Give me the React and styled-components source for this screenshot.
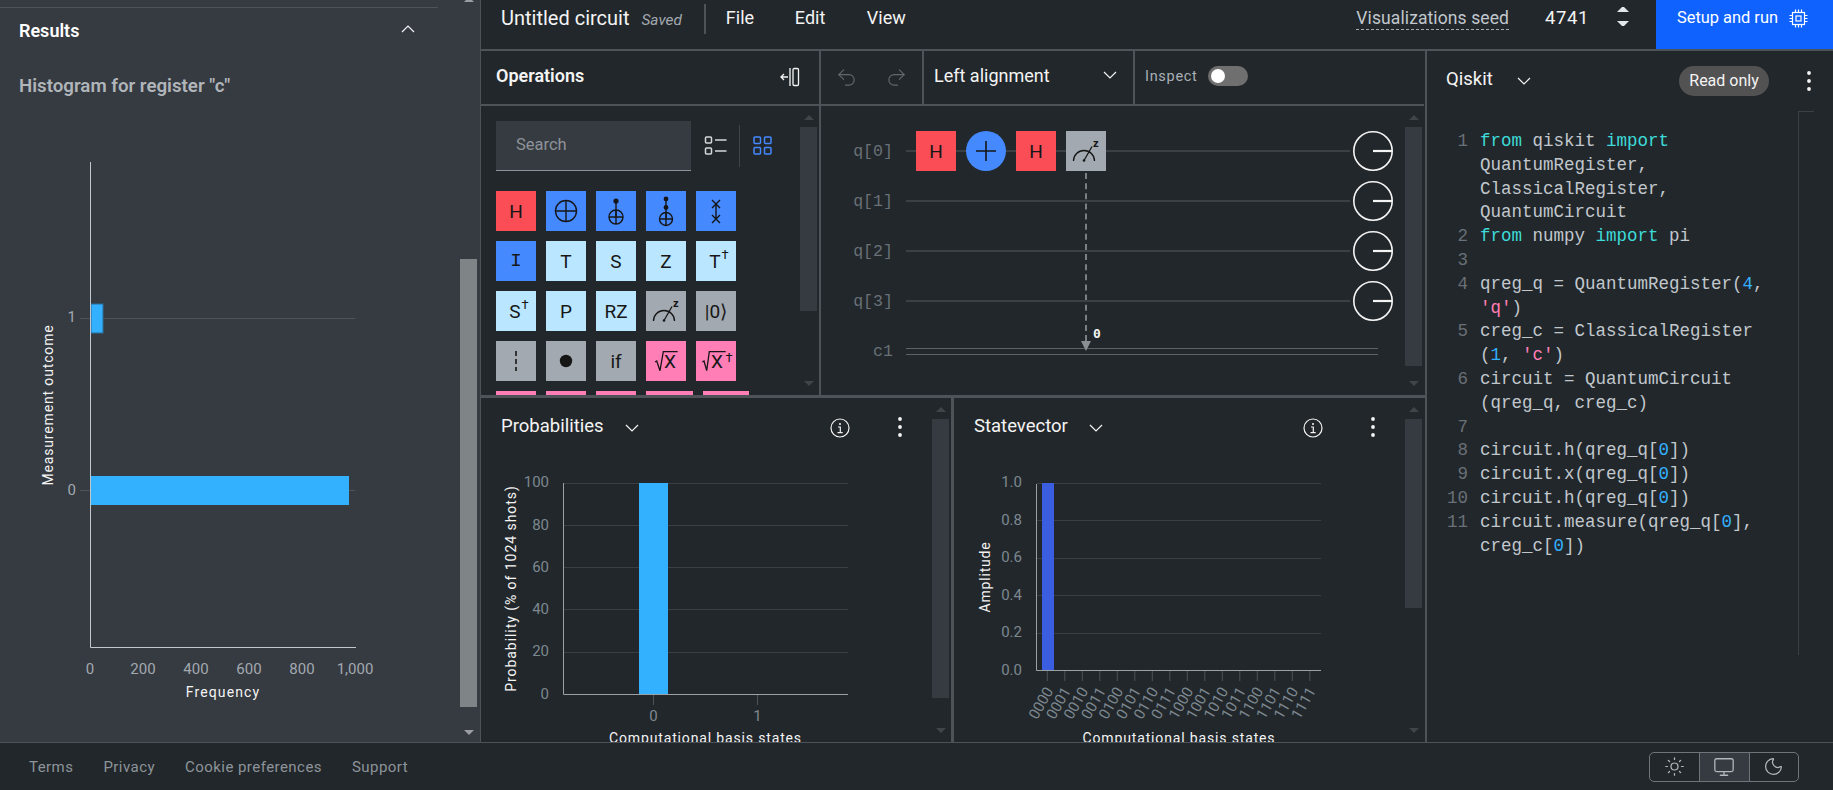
import React from 'react';
import styled, { createGlobalStyle } from 'styled-components';
import { Undo2, Redo2, Sun, Monitor, Moon } from 'lucide-react';

const BG = '#22272b';
const PANEL = '#363a41';
const LINE = '#4d5358';
const SANS = 'Roboto, "Noto Sans", Arial, sans-serif';
const MONO = '"Liberation Mono", "DejaVu Sans Mono", monospace';

const GlobalStyle = createGlobalStyle`
  html, body { margin: 0; padding: 0; background: ${BG}; overflow: hidden; }
  * { box-sizing: border-box; }
  body { font-family: ${SANS}; color: #f4f4f4; }
`;

const Page = styled.div`
  width: 1833px;
  height: 790px;
  display: flex;
  flex-direction: column;
`;
const Main = styled.div`
  height: 742px;
  display: flex;
`;

/* left results column */
const ResultsColumn = styled.aside`
  width: 480px;
  flex: none;
  height: 742px;
  background: ${PANEL};
  display: flex;
  overflow: hidden;
  padding-right: 3px;
`;
const ResultsContent = styled.div`
  width: 460px;
`;
const Rule = styled.div`
  margin-top: 7px;
  width: 438px;
  height: 1px;
  background: ${LINE};
`;
const ResultsHead = styled.div`
  height: 46px;
  padding: 0 23px 2px 19px;
  display: flex;
  align-items: center;
  justify-content: space-between;
  font-size: 18px;
  font-weight: 600;
  color: #fff;
  width: 438px;
  svg { margin-top: -3px; }
`;
const HistogramTitle = styled.div`
  margin: 20px 0 0 19px;
  height: 24px;
  line-height: 24px;
  font-size: 18.7px;
  font-weight: 600;
  color: #b0b5ba;
`;
const ChartSvg = styled.svg`
  display: block;
  flex: none;
`;
const Tick = styled.text`
  font-family: ${SANS};
  font-size: 15px;
  fill: ${p => p.$color || '#7c8790'};
`;
const AxisLabel = styled.text`
  font-family: ${SANS};
  font-size: 14px;
  fill: #f4f4f4;
  letter-spacing: ${p => p.$spacing || '0.3px'};
`;

/* scrollbars */
const Scrollbar = styled.div`
  flex: none;
  width: 17px;
  display: flex;
  flex-direction: column;
  align-items: center;
  margin-right: ${p => p.$right ?? 2}px;
`;
const ArrowUp = styled.div`
  flex: none;
  margin-top: ${p => p.$top ?? 9}px;
  border: 5px solid transparent;
  border-top: 0;
  border-bottom: 5px solid ${p => p.$color || '#3f454b'};
`;
const ArrowDown = styled.div`
  flex: none;
  margin-top: auto;
  margin-bottom: ${p => p.$bottom ?? 9}px;
  border: 5px solid transparent;
  border-bottom: 0;
  border-top: 5px solid ${p => p.$color || '#3f454b'};
`;
const Thumb = styled.div`
  flex: none;
  width: 17px;
  height: ${p => p.$height}px;
  margin-top: ${p => p.$gap ?? 7}px;
  background: ${p => p.$color || PANEL};
`;

/* workspace */
const Workspace = styled.div`
  flex: 1;
  display: flex;
  flex-direction: column;
  border-left: 1px solid ${LINE};
  min-width: 0;
`;
const TopBar = styled.header`
  height: 51px;
  flex: none;
  display: flex;
  border-bottom: 2px solid ${LINE};
`;
const CircuitName = styled.div`
  margin: 6px 0 0 20px;
  height: 24px;
  line-height: 24px;
  font-size: 20px;
  color: #f4f4f4;
`;
const SavedTag = styled.div`
  margin: 8px 0 0 12px;
  height: 24px;
  line-height: 24px;
  font-size: 15.4px;
  font-style: italic;
  color: #a2a9b0;
`;
const Separator = styled.div`
  width: 2px;
  height: 30px;
  margin: 4px 20px 0 22px;
  background: ${LINE};
`;
const MenuItem = styled.div`
  margin-top: 6px;
  width: ${p => p.$w}px;
  height: 24px;
  line-height: 24px;
  font-size: 18px;
`;
const SeedLabel = styled.div`
  margin: 7px 0 0 auto;
  height: 23px;
  line-height: 23px;
  font-size: 17.5px;
  letter-spacing: 0.1px;
  color: #c1c7cd;
  border-bottom: 1px dashed #a2a9b0;
`;
const SeedValue = styled.div`
  margin: 6px 0 0 36px;
  width: 72px;
  height: 24px;
  line-height: 24px;
  font-size: 18.5px;
  letter-spacing: 0.6px;
`;
const Stepper = styled.div`
  width: 12px;
  margin: 7px 27px 0 0;
  display: flex;
  flex-direction: column;
  gap: 9px;
`;
const StepUp = styled.div`
  border: 5.5px solid transparent;
  border-top: 0;
  border-bottom: 5.5px solid #e4e7ea;
`;
const StepDown = styled.div`
  border: 5.5px solid transparent;
  border-bottom: 0;
  border-top: 5.5px solid #e4e7ea;
`;
const RunButton = styled.div`
  width: 177px;
  height: 49px;
  background: #0f62fe;
  display: flex;
  padding: 6px 0 0 21px;
  gap: 11px;
  font-size: 16.4px;
  line-height: 24px;
  color: #fff;
  svg { margin-top: 3px; }
`;

const PanelGrid = styled.div`
  flex: 1;
  display: flex;
`;
const PanelColumns = styled.div`
  width: 945.5px;
  flex: none;
  display: flex;
  flex-direction: column;
  border-right: 2.5px solid ${LINE};
`;
const TopRow = styled.div`
  height: 347px;
  display: flex;
  border-bottom: 3px solid ${LINE};
`;
const OpsPanel = styled.section`
  width: 340px;
  flex: none;
  border-right: 2px solid ${LINE};
  display: flex;
  flex-direction: column;
`;
const CircuitPanel = styled.section`
  width: 603px;
  flex: none;
  display: flex;
  flex-direction: column;
`;
const PanelHead = styled.div`
  height: 55px;
  flex: none;
  display: flex;
  align-items: center;
  border-bottom: 2px solid ${LINE};
`;
const OpsTitle = styled.div`
  margin-left: 15px;
  font-size: 18px;
  font-weight: 600;
  flex: 1;
  margin-top: -4px;
`;
const CollapseIcon = styled.svg`
  margin: -2px 19px 0 0;
`;
const PanelBody = styled.div`
  height: 289px;
  display: flex;
  overflow: hidden;
`;
const OpsContent = styled.div`
  flex: 1;
  padding: 15px 0 0 15px;
  min-width: 0;
`;
const SearchRow = styled.div`
  display: flex;
  align-items: center;
  height: 50px;
`;
const SearchBox = styled.div`
  width: 195px;
  height: 50px;
  background: ${PANEL};
  border-bottom: 1px solid #8d9399;
  padding-left: 20px;
  line-height: 48px;
  font-size: 16.5px;
  color: #8d9399;
`;
const ListViewIcon = styled.svg`
  margin-left: 13px;
`;
const ViewSwitch = styled.div`
  width: 1px;
  height: 42px;
  background: #3f454b;
  margin: 0 13px 0 11px;
`;
const GateGrid = styled.div`
  display: flex;
  flex-wrap: wrap;
  gap: 10px;
  width: 260px;
  margin-top: 20px;
`;
const GATE_COLORS = {
  red: '#fa4d56',
  blue: '#4589ff',
  sky: '#bae6ff',
  gray: '#a2a9b0',
  pink: '#ff7eb6',
};
const Gate = styled.div`
  position: relative;
  flex: none;
  width: ${p => p.$w || 40}px;
  height: 40px;
  background: ${p => GATE_COLORS[p.$tone]};
  color: #161616;
  font-size: 19px;
  display: flex;
  align-items: center;
  justify-content: center;
  svg { display: block; }
  sup { font-size: 13px; line-height: 0; position: relative; top: -1px; margin-left: 1px; }
`;
const GateWord = styled.span`
  margin-left: ${p => p.$shift || 0}px;
  font-family: ${p => (p.$serif ? MONO : 'inherit')};
`;
const GateSvgText = styled.text`
  font-family: ${SANS};
  font-size: ${p => p.$size || 19}px;
  font-weight: ${p => p.$weight || 400};
  fill: #161616;
`;

/* circuit */
const CircuitContent = styled.div`
  flex: 1;
  padding-top: 20px;
  min-width: 0;
`;
const WireRow = styled.div`
  height: 50px;
  display: flex;
  align-items: center;
`;
const WireLabel = styled.div`
  width: 72px;
  margin-right: 13px;
  text-align: right;
  font-family: ${MONO};
  font-size: 16.6px;
  color: #697077;
`;
const WireTrack = styled.div`
  position: relative;
  width: 444px;
  height: 40px;
  display: flex;
  align-items: center;
  gap: 10px;
  padding-left: 10px;
  &::before {
    content: '';
    position: absolute;
    left: 0;
    right: 0;
    top: 19px;
    height: 2px;
    background: #3a4046;
  }
`;
const ClassicalWire = styled.div`
  width: 472px;
  height: 7px;
  border-top: 1px solid #5c6268;
  border-bottom: 1px solid #5c6268;
`;
const CircleGate = styled.div`
  position: relative;
  width: 40px;
  height: 40px;
  border-radius: 50%;
  background: #4589ff;
  display: flex;
  align-items: center;
  justify-content: center;
`;
const Meter = styled.svg`
  display: block;
  margin-left: 3px;
`;
const ClassicalLink = styled.div`
  position: absolute;
  left: 19px;
  top: 42px;
  height: 168px;
  border-left: 2px dashed #7a7f84;
`;
const LinkArrow = styled.div`
  position: absolute;
  left: -6px;
  bottom: -10px;
  border: 5px solid transparent;
  border-bottom: 0;
  border-top: 10px solid #8a8f94;
`;
const LinkBit = styled.div`
  position: absolute;
  left: 6px;
  bottom: 0;
  font-family: "DejaVu Sans Mono", monospace;
  font-weight: 700;
  font-size: 13px;
  color: #f4f4f4;
`;

/* circuit toolbar */
const HistoryGroup = styled.div`
  width: 103px;
  height: 100%;
  display: flex;
  align-items: center;
  gap: 27px;
  padding-left: 14px;
  border-right: 2px solid ${LINE};
  color: #62676c;
`;
const AlignSelect = styled.div`
  width: 211px;
  height: 100%;
  display: flex;
  align-items: center;
  justify-content: space-between;
  padding: 0 16px 5px 10px;
  border-right: 2px solid ${LINE};
  font-size: 18px;
`;
const InspectGroup = styled.div`
  display: flex;
  align-items: center;
  gap: 10px;
  padding: 0 0 3px 10px;
  font-size: 14.5px;
  letter-spacing: 0.7px;
  color: #a9afb6;
`;
const Toggle = styled.div`
  width: 40px;
  height: 20px;
  border-radius: 10px;
  background: #6f6f6f;
  padding: 3px;
  &::after {
    content: '';
    display: block;
    width: 14px;
    height: 14px;
    border-radius: 50%;
    background: #fff;
  }
`;

/* visualization panels */
const VizRow = styled.div`
  height: 344px;
  display: flex;
`;
const VizPanel = styled.section`
  width: ${p => p.$w}px;
  flex: none;
  display: flex;
  overflow: hidden;
  border-right: ${p => (p.$divided ? `3px solid ${LINE}` : '0')};
`;
const VizContent = styled.div`
  flex: 1;
  min-width: 0;
`;
const VizHead = styled.div`
  height: 62px;
  display: flex;
  align-items: center;
  padding: 0 0 6px 20px;
  font-size: 18.5px;
`;
const VizChevron = styled.span`
  display: flex;
  margin: 4px 0 0 21px;
`;
const VizInfo = styled.svg`
  margin-left: auto;
  margin-top: 4px;
`;
const VizDots = styled.svg`
  margin: 2px 29px 0 47px;
`;

/* code panel */
const CodePanel = styled.section`
  flex: 1;
  display: flex;
  flex-direction: column;
  min-width: 0;
`;
const CodeHead = styled.div`
  height: 60px;
  flex: none;
  display: flex;
  align-items: center;
  padding: 0 21px 0 19.5px;
`;
const CodeTitle = styled.div`
  font-size: 18.5px;
  margin-top: -4px;
`;
const CodeChevron = styled.span`
  display: flex;
  margin: 0 0 0 24px;
`;
const ReadOnly = styled.div`
  margin-left: auto;
  width: 90px;
  height: 30px;
  border-radius: 15px;
  background: #525252;
  line-height: 29px;
  text-align: center;
  font-size: 16px;
  color: #f4f4f4;
`;
const CodeDots = styled.svg`
  margin-left: 37px;
`;
const CodeBody = styled.div`
  display: flex;
`;
const CodeText = styled.div`
  width: 371.5px;
  padding-top: 19px;
  font-family: ${MONO};
  font-size: 17.5px;
  line-height: 23.8px;
  color: #c1c7cd;
`;
const CodeRow = styled.div`
  height: 23.8px;
  display: flex;
  white-space: pre;
`;
const LineNo = styled.span`
  width: 41.5px;
  margin-right: 12px;
  text-align: right;
  color: #697077;
`;
const Tok = styled.span`
  color: ${p => ({ kw: '#3ddbd9', num: '#33b1ff', str: '#ff7eb6' }[p.$t] || 'inherit')};
`;
const OverviewRuler = styled.div`
  width: 16px;
  height: 544px;
  border-left: 1px solid #3a4046;
  border-top: 1px solid #3a4046;
`;

/* footer */
const Footer = styled.footer`
  height: 48px;
  flex: none;
  border-top: 1px solid ${LINE};
  display: flex;
  align-items: center;
  padding: 0 34px 0 29px;
  font-size: 15px;
  letter-spacing: 0.45px;
  color: #8d949a;
  gap: 30px;
`;
const ThemeSwitch = styled.div`
  margin-left: auto;
  height: 30px;
  display: flex;
  border: 1px solid #6f7479;
  border-radius: 5px;
  overflow: hidden;
`;
const ThemeOption = styled.div`
  width: 49.5px;
  display: flex;
  align-items: center;
  justify-content: center;
  color: #b3b8bd;
  background: ${p => (p.$active ? PANEL : 'transparent')};
  border-left: ${p => (p.$first ? '0' : '1px solid #6f7479')};
`;

const Chevron = ({ up, color = '#f4f4f4', size = 14 }) => (
  <svg width={size} height={size} viewBox="0 0 14 14" fill="none" stroke={color} strokeWidth="1.2">
    <polyline points={up ? '1,10 7,4 13,10' : '1,4 7,10 13,4'} />
  </svg>
);

const Dots = () => (
  <>
    <circle cx="3" cy="3" r="1.9" fill="#f4f4f4" />
    <circle cx="3" cy="11" r="1.9" fill="#f4f4f4" />
    <circle cx="3" cy="19" r="1.9" fill="#f4f4f4" />
  </>
);

const Info = () => (
  <VizInfo width="20" height="20" viewBox="0 0 20 20" fill="none" stroke="#f4f4f4" strokeWidth="1.2">
    <circle cx="10" cy="10" r="9" />
    <path d="M8 9h2.3v5.5M7.5 14.6h5.2" />
    <circle cx="10" cy="6" r="1" fill="#f4f4f4" stroke="none" />
  </VizInfo>
);

const ChipIcon = () => (
  <svg width="19" height="19" viewBox="0 0 19 19" fill="none" stroke="#fff" strokeWidth="1.2">
    <rect x="3.5" y="3.5" width="12" height="12" />
    <rect x="7" y="7" width="5" height="5" />
    <path d="M6.5 0.5v3M9.5 0.5v3M12.5 0.5v3M6.5 15.5v3M9.5 15.5v3M12.5 15.5v3M0.5 6.5h3M0.5 9.5h3M0.5 12.5h3M15.5 6.5h3M15.5 9.5h3M15.5 12.5h3" />
  </svg>
);

const OPlus = ({ cx, cy, r }) => (
  <g fill="none" stroke="#161616" strokeWidth="1.4">
    <circle cx={cx} cy={cy} r={r} />
    <path d={`M${cx - r} ${cy}h${r * 2}M${cx} ${cy - r}v${r * 2}`} />
  </g>
);

const GateIcon = ({ children }) => (
  <svg width="40" height="40" viewBox="0 0 40 40">{children}</svg>
);

const MeasureIcon = () => (
  <GateIcon>
    <g fill="none" stroke="#161616" strokeWidth="1.3">
      <path d="M7.5 30a10.5 10.5 0 0 1 21 0" />
      <path d="M18 29.5L26 15.5" />
    </g>
    <circle cx="18" cy="29.5" r="1.3" fill="#161616" />
    <GateSvgText x="27" y="16" $size={11} $weight={700}>z</GateSvgText>
  </GateIcon>
);

const SqrtX = ({ dagger }) => (
  <GateIcon>
    <path
      d={dagger ? 'M6.3 21l1.7-1 2.7 9.7 2.6-19H29.7' : 'M9 21l1.7-1 3.3 9.7 3.3-19H31.7'}
      fill="none"
      stroke="#161616"
      strokeWidth="1.3"
    />
    <GateSvgText x={dagger ? 15 : 18} y="27" $size={19}>X</GateSvgText>
    {dagger && <GateSvgText x="29.5" y="21" $size={13}>†</GateSvgText>}
  </GateIcon>
);

const OPERATIONS = [
  { tone: 'red', label: 'H' },
  { tone: 'blue', icon: <GateIcon><OPlus cx={20} cy={20} r={10.5} /></GateIcon> },
  {
    tone: 'blue',
    icon: (
      <GateIcon>
        <path d="M20 11v16" stroke="#161616" strokeWidth="1.4" />
        <circle cx="20" cy="10" r="2.6" fill="#161616" />
        <OPlus cx={20} cy={26} r={7} />
      </GateIcon>
    ),
  },
  {
    tone: 'blue',
    icon: (
      <GateIcon>
        <path d="M20 8v20" stroke="#161616" strokeWidth="1.4" />
        <circle cx="20" cy="8" r="2.4" fill="#161616" />
        <circle cx="20" cy="16.5" r="2.4" fill="#161616" />
        <OPlus cx={20} cy={28} r={6.5} />
      </GateIcon>
    ),
  },
  {
    tone: 'blue',
    icon: (
      <GateIcon>
        <path d="M16 9l8 8M24 9l-8 8M16 24l8 8M24 24l-8 8M20 13v15" stroke="#161616" strokeWidth="1.4" fill="none" />
      </GateIcon>
    ),
  },
  { tone: 'blue', label: 'I', serif: true },
  { tone: 'sky', label: 'T' },
  { tone: 'sky', label: 'S' },
  { tone: 'sky', label: 'Z' },
  { tone: 'sky', label: 'T', dagger: true },
  { tone: 'sky', label: 'S', dagger: true },
  { tone: 'sky', label: 'P' },
  { tone: 'sky', label: 'RZ' },
  { tone: 'gray', icon: <MeasureIcon /> },
  { tone: 'gray', label: '|0⟩' },
  {
    tone: 'gray',
    icon: <GateIcon><path d="M20 10v20" stroke="#161616" strokeWidth="1.6" strokeDasharray="5 3" /></GateIcon>,
  },
  { tone: 'gray', icon: <GateIcon><circle cx="20" cy="20" r="6.2" fill="#161616" /></GateIcon> },
  { tone: 'gray', label: 'if' },
  { tone: 'pink', icon: <SqrtX /> },
  { tone: 'pink', icon: <SqrtX dagger /> },
  { tone: 'pink' },
  { tone: 'pink' },
  { tone: 'pink' },
  { tone: 'pink', w: 47 },
  { tone: 'pink', w: 46 },
];

const MeterDial = () => (
  <Meter width="40" height="40" viewBox="0 0 40 40" fill={BG} stroke="#f4f4f4" strokeWidth="1.6">
    <circle cx="20" cy="20" r="19.2" />
    <path d="M20 20h19" strokeWidth="2.2" />
  </Meter>
);

const CODE = [
  ['1', [['kw', 'from'], ['', ' qiskit '], ['kw', 'import']]],
  ['', [['', 'QuantumRegister,']]],
  ['', [['', 'ClassicalRegister,']]],
  ['', [['', 'QuantumCircuit']]],
  ['2', [['kw', 'from'], ['', ' numpy '], ['kw', 'import'], ['', ' pi']]],
  ['3', []],
  ['4', [['', 'qreg_q = QuantumRegister('], ['num', '4'], ['', ',']]],
  ['', [['str', "'q'"], ['', ')']]],
  ['5', [['', 'creg_c = ClassicalRegister']]],
  ['', [['', '('], ['num', '1'], ['', ', '], ['str', "'c'"], ['', ')']]],
  ['6', [['', 'circuit = QuantumCircuit']]],
  ['', [['', '(qreg_q, creg_c)']]],
  ['7', []],
  ['8', [['', 'circuit.h(qreg_q['], ['num', '0'], ['', '])']]],
  ['9', [['', 'circuit.x(qreg_q['], ['num', '0'], ['', '])']]],
  ['10', [['', 'circuit.h(qreg_q['], ['num', '0'], ['', '])']]],
  ['11', [['', 'circuit.measure(qreg_q['], ['num', '0'], ['', '],']]],
  ['', [['', 'creg_c['], ['num', '0'], ['', '])']]],
];

const Histogram = () => (
  <ChartSvg width="460" height="644" viewBox="0 98 460 644">
    <path d="M80 318.5H355" stroke={LINE} />
    <path d="M80 490.5H91M349 490.5H355" stroke={LINE} />
    <rect x="91" y="304" width="12" height="29" fill="#33b1ff" stroke="#2a6d9c" />
    <rect x="91" y="476" width="258" height="29" fill="#33b1ff" />
    <path d="M90.5 162V647.5H356" fill="none" stroke="#c1c7cd" />
    <Tick x="76" y="322" textAnchor="end" $color="#a2a9b0">1</Tick>
    <Tick x="76" y="494.5" textAnchor="end" $color="#a2a9b0">0</Tick>
    {[[90, '0'], [143, '200'], [196, '400'], [249, '600'], [302, '800'], [355, '1,000']].map(([x, t]) => (
      <Tick key={t} x={x} y="673.5" textAnchor="middle" $color="#a2a9b0">{t}</Tick>
    ))}
    <AxisLabel x="223" y="697" textAnchor="middle" $spacing="1.1px">Frequency</AxisLabel>
    <AxisLabel x="53" y="405" textAnchor="middle" transform="rotate(-90 53 405)" $spacing="0.85px">
      Measurement outcome
    </AxisLabel>
  </ChartSvg>
);

const ProbabilityChart = () => (
  <ChartSvg width="451" height="282" viewBox="481 460 451 282">
    {[483, 525, 567, 609, 652].map(y => (
      <path key={y} d={`M564 ${y}.5H848`} stroke="#393f44" />
    ))}
    <rect x="639" y="483" width="29" height="211" fill="#33b1ff" />
    <path d="M563.5 483V694.5H848" fill="none" stroke="#9ba1a7" />
    <path d="M653.5 695v10M757.5 695v10" stroke="#4d5358" />
    {[[486.5, '100'], [529.5, '80'], [571.5, '60'], [613.5, '40'], [656, '20'], [698.5, '0']].map(([y, t]) => (
      <Tick key={t} x="549" y={y} textAnchor="end">{t}</Tick>
    ))}
    <Tick x="653.5" y="720.5" textAnchor="middle">0</Tick>
    <Tick x="757.5" y="720.5" textAnchor="middle">1</Tick>
    <AxisLabel x="516" y="588.5" textAnchor="middle" transform="rotate(-90 516 588.5)" $spacing="0.95px">
      Probability (% of 1024 shots)
    </AxisLabel>
    <AxisLabel x="705.5" y="743" textAnchor="middle" $spacing="0.85px">Computational basis states</AxisLabel>
  </ChartSvg>
);

const STATES = Array.from({ length: 16 }, (_, i) => i.toString(2).padStart(4, '0'));

const AmplitudeChart = () => (
  <ChartSvg width="451" height="282" viewBox="954 460 451 282">
    {[520, 558, 595, 633].map(y => (
      <path key={y} d={`M1037 ${y}.5H1321`} stroke="#393f44" />
    ))}
    <path d="M1037 483.5H1321" stroke="#393f44" />
    <rect x="1042" y="483" width="12" height="187" fill="#3b5de0" />
    <path d="M1036.5 484V670.5H1321" fill="none" stroke="#9ba1a7" />
    {STATES.map((s, i) => {
      const x = 1047.3 + i * 17.5;
      return (
        <g key={s}>
          <path d={`M${x} 671v10`} stroke="#4d5358" />
          <Tick x={x + 6.5} y="691" textAnchor="end" transform={`rotate(-60 ${x + 6.5} 691)`}>{s}</Tick>
        </g>
      );
    })}
    {[[486.5, '1.0'], [525, '0.8'], [562, '0.6'], [599.5, '0.4'], [636.5, '0.2'], [674.5, '0.0']].map(([y, t]) => (
      <Tick key={t} x="1022" y={y} textAnchor="end">{t}</Tick>
    ))}
    <AxisLabel x="990" y="577" textAnchor="middle" transform="rotate(-90 990 577)" $spacing="0.8px">Amplitude</AxisLabel>
    <AxisLabel x="1179" y="743" textAnchor="middle" $spacing="0.85px">Computational basis states</AxisLabel>
  </ChartSvg>
);

export default function App() {
  return (
    <Page>
      <GlobalStyle />
      <Main>
        <ResultsColumn>
          <ResultsContent>
            <Rule />
            <ResultsHead>
              Results
              <Chevron up />
            </ResultsHead>
            <HistogramTitle>Histogram for register "c"</HistogramTitle>
            <Histogram />
          </ResultsContent>
          <Scrollbar $right={0}>
            <ArrowUp $top={-3} $color="#9a9ea2" />
            <Thumb $height={448} $gap={257} $color="#7f8487" />
            <ArrowDown $color="#9a9ea2" $bottom={7} />
          </Scrollbar>
        </ResultsColumn>

        <Workspace>
          <TopBar>
            <CircuitName>Untitled circuit</CircuitName>
            <SavedTag>Saved</SavedTag>
            <Separator />
            <MenuItem $w={69}>File</MenuItem>
            <MenuItem $w={72}>Edit</MenuItem>
            <MenuItem $w={50}>View</MenuItem>
            <SeedLabel>Visualizations seed</SeedLabel>
            <SeedValue>4741</SeedValue>
            <Stepper>
              <StepUp />
              <StepDown />
            </Stepper>
            <RunButton>
              Setup and run
              <ChipIcon />
            </RunButton>
          </TopBar>

          <PanelGrid>
            <PanelColumns>
              <TopRow>
                <OpsPanel>
                  <PanelHead>
                    <OpsTitle>Operations</OpsTitle>
                    <CollapseIcon width="20" height="20" viewBox="0 0 20 20" fill="none" stroke="#f4f4f4" strokeWidth="1.3">
                      <path d="M1 10h7M4 7l-3 3 3 3M10 1v18" />
                      <rect x="13" y="1.5" width="5.5" height="17" rx="1.2" />
                    </CollapseIcon>
                  </PanelHead>
                  <PanelBody>
                    <OpsContent>
                      <SearchRow>
                        <SearchBox>Search</SearchBox>
                        <ListViewIcon width="24" height="24" viewBox="0 0 24 24" fill="none" stroke="#d6d9dc" strokeWidth="1.5">
                          <rect x="1.5" y="3" width="6" height="6" rx="1" />
                          <rect x="1.5" y="14" width="6" height="6" rx="1" />
                          <path d="M11 6h11.5M11 17h11.5" />
                        </ListViewIcon>
                        <ViewSwitch />
                        <svg width="20" height="20" viewBox="0 0 20 20" fill="none" stroke="#4589ff" strokeWidth="1.5">
                          <rect x="1" y="1" width="6.5" height="6.5" rx="1" />
                          <rect x="11.5" y="1" width="6.5" height="6.5" rx="1" />
                          <rect x="1" y="11.5" width="6.5" height="6.5" rx="1" />
                          <rect x="11.5" y="11.5" width="6.5" height="6.5" rx="1" />
                        </svg>
                      </SearchRow>
                      <GateGrid>
                        {OPERATIONS.map((op, i) => (
                          <Gate key={i} $tone={op.tone} $w={op.w}>
                            {op.icon}
                            {op.label && (
                              <GateWord $shift={op.dagger ? 6 : 0} $serif={op.serif}>
                                {op.label}
                                {op.dagger && <sup>†</sup>}
                              </GateWord>
                            )}
                          </Gate>
                        ))}
                      </GateGrid>
                    </OpsContent>
                    <Scrollbar>
                      <ArrowUp />
                      <Thumb $height={184} />
                      <ArrowDown />
                    </Scrollbar>
                  </PanelBody>
                </OpsPanel>

                <CircuitPanel>
                  <PanelHead>
                    <HistoryGroup>
                      <Undo2 size={23} strokeWidth={1.2} />
                      <Redo2 size={23} strokeWidth={1.2} />
                    </HistoryGroup>
                    <AlignSelect>
                      Left alignment
                      <Chevron />
                    </AlignSelect>
                    <InspectGroup>
                      Inspect
                      <Toggle />
                    </InspectGroup>
                  </PanelHead>
                  <PanelBody>
                    <CircuitContent>
                      <WireRow>
                        <WireLabel>q[0]</WireLabel>
                        <WireTrack>
                          <Gate $tone="red">H</Gate>
                          <CircleGate>
                            <svg width="24" height="24" viewBox="0 0 24 24" stroke="#161616" strokeWidth="1.6">
                              <path d="M2 12h20M12 2v20" />
                            </svg>
                          </CircleGate>
                          <Gate $tone="red">H</Gate>
                          <Gate $tone="gray">
                            <MeasureIcon />
                            <ClassicalLink>
                              <LinkBit>0</LinkBit>
                              <LinkArrow />
                            </ClassicalLink>
                          </Gate>
                        </WireTrack>
                        <MeterDial />
                      </WireRow>
                      {['q[1]', 'q[2]', 'q[3]'].map(q => (
                        <WireRow key={q}>
                          <WireLabel>{q}</WireLabel>
                          <WireTrack />
                          <MeterDial />
                        </WireRow>
                      ))}
                      <WireRow>
                        <WireLabel>c1</WireLabel>
                        <ClassicalWire />
                      </WireRow>
                    </CircuitContent>
                    <Scrollbar>
                      <ArrowUp />
                      <Thumb $height={239} />
                      <ArrowDown />
                    </Scrollbar>
                  </PanelBody>
                </CircuitPanel>
              </TopRow>

              <VizRow>
                <VizPanel $w={473} $divided>
                  <VizContent>
                    <VizHead>
                      Probabilities
                      <VizChevron><Chevron /></VizChevron>
                      <Info />
                      <VizDots width="6" height="22" viewBox="0 0 6 22"><Dots /></VizDots>
                    </VizHead>
                    <ProbabilityChart />
                  </VizContent>
                  <Scrollbar>
                    <ArrowUp />
                    <Thumb $height={279} />
                    <ArrowDown />
                  </Scrollbar>
                </VizPanel>
                <VizPanel $w={470}>
                  <VizContent>
                    <VizHead>
                      Statevector
                      <VizChevron><Chevron /></VizChevron>
                      <Info />
                      <VizDots width="6" height="22" viewBox="0 0 6 22"><Dots /></VizDots>
                    </VizHead>
                    <AmplitudeChart />
                  </VizContent>
                  <Scrollbar>
                    <ArrowUp />
                    <Thumb $height={189} />
                    <ArrowDown />
                  </Scrollbar>
                </VizPanel>
              </VizRow>
            </PanelColumns>

            <CodePanel>
              <CodeHead>
                <CodeTitle>Qiskit</CodeTitle>
                <CodeChevron><Chevron /></CodeChevron>
                <ReadOnly>Read only</ReadOnly>
                <CodeDots width="6" height="22" viewBox="0 0 6 22"><Dots /></CodeDots>
              </CodeHead>
              <CodeBody>
                <CodeText>
                  {CODE.map(([n, toks], i) => (
                    <CodeRow key={i}>
                      <LineNo>{n}</LineNo>
                      <span>{toks.map(([t, s], j) => <Tok key={j} $t={t}>{s}</Tok>)}</span>
                    </CodeRow>
                  ))}
                </CodeText>
                <OverviewRuler />
              </CodeBody>
            </CodePanel>
          </PanelGrid>
        </Workspace>
      </Main>

      <Footer>
        <span>Terms</span>
        <span>Privacy</span>
        <span>Cookie preferences</span>
        <span>Support</span>
        <ThemeSwitch>
          <ThemeOption $first><Sun size={21} strokeWidth={1.4} /></ThemeOption>
          <ThemeOption $active><Monitor size={22} strokeWidth={1.4} /></ThemeOption>
          <ThemeOption><Moon size={21} strokeWidth={1.4} /></ThemeOption>
        </ThemeSwitch>
      </Footer>
    </Page>
  );
}
